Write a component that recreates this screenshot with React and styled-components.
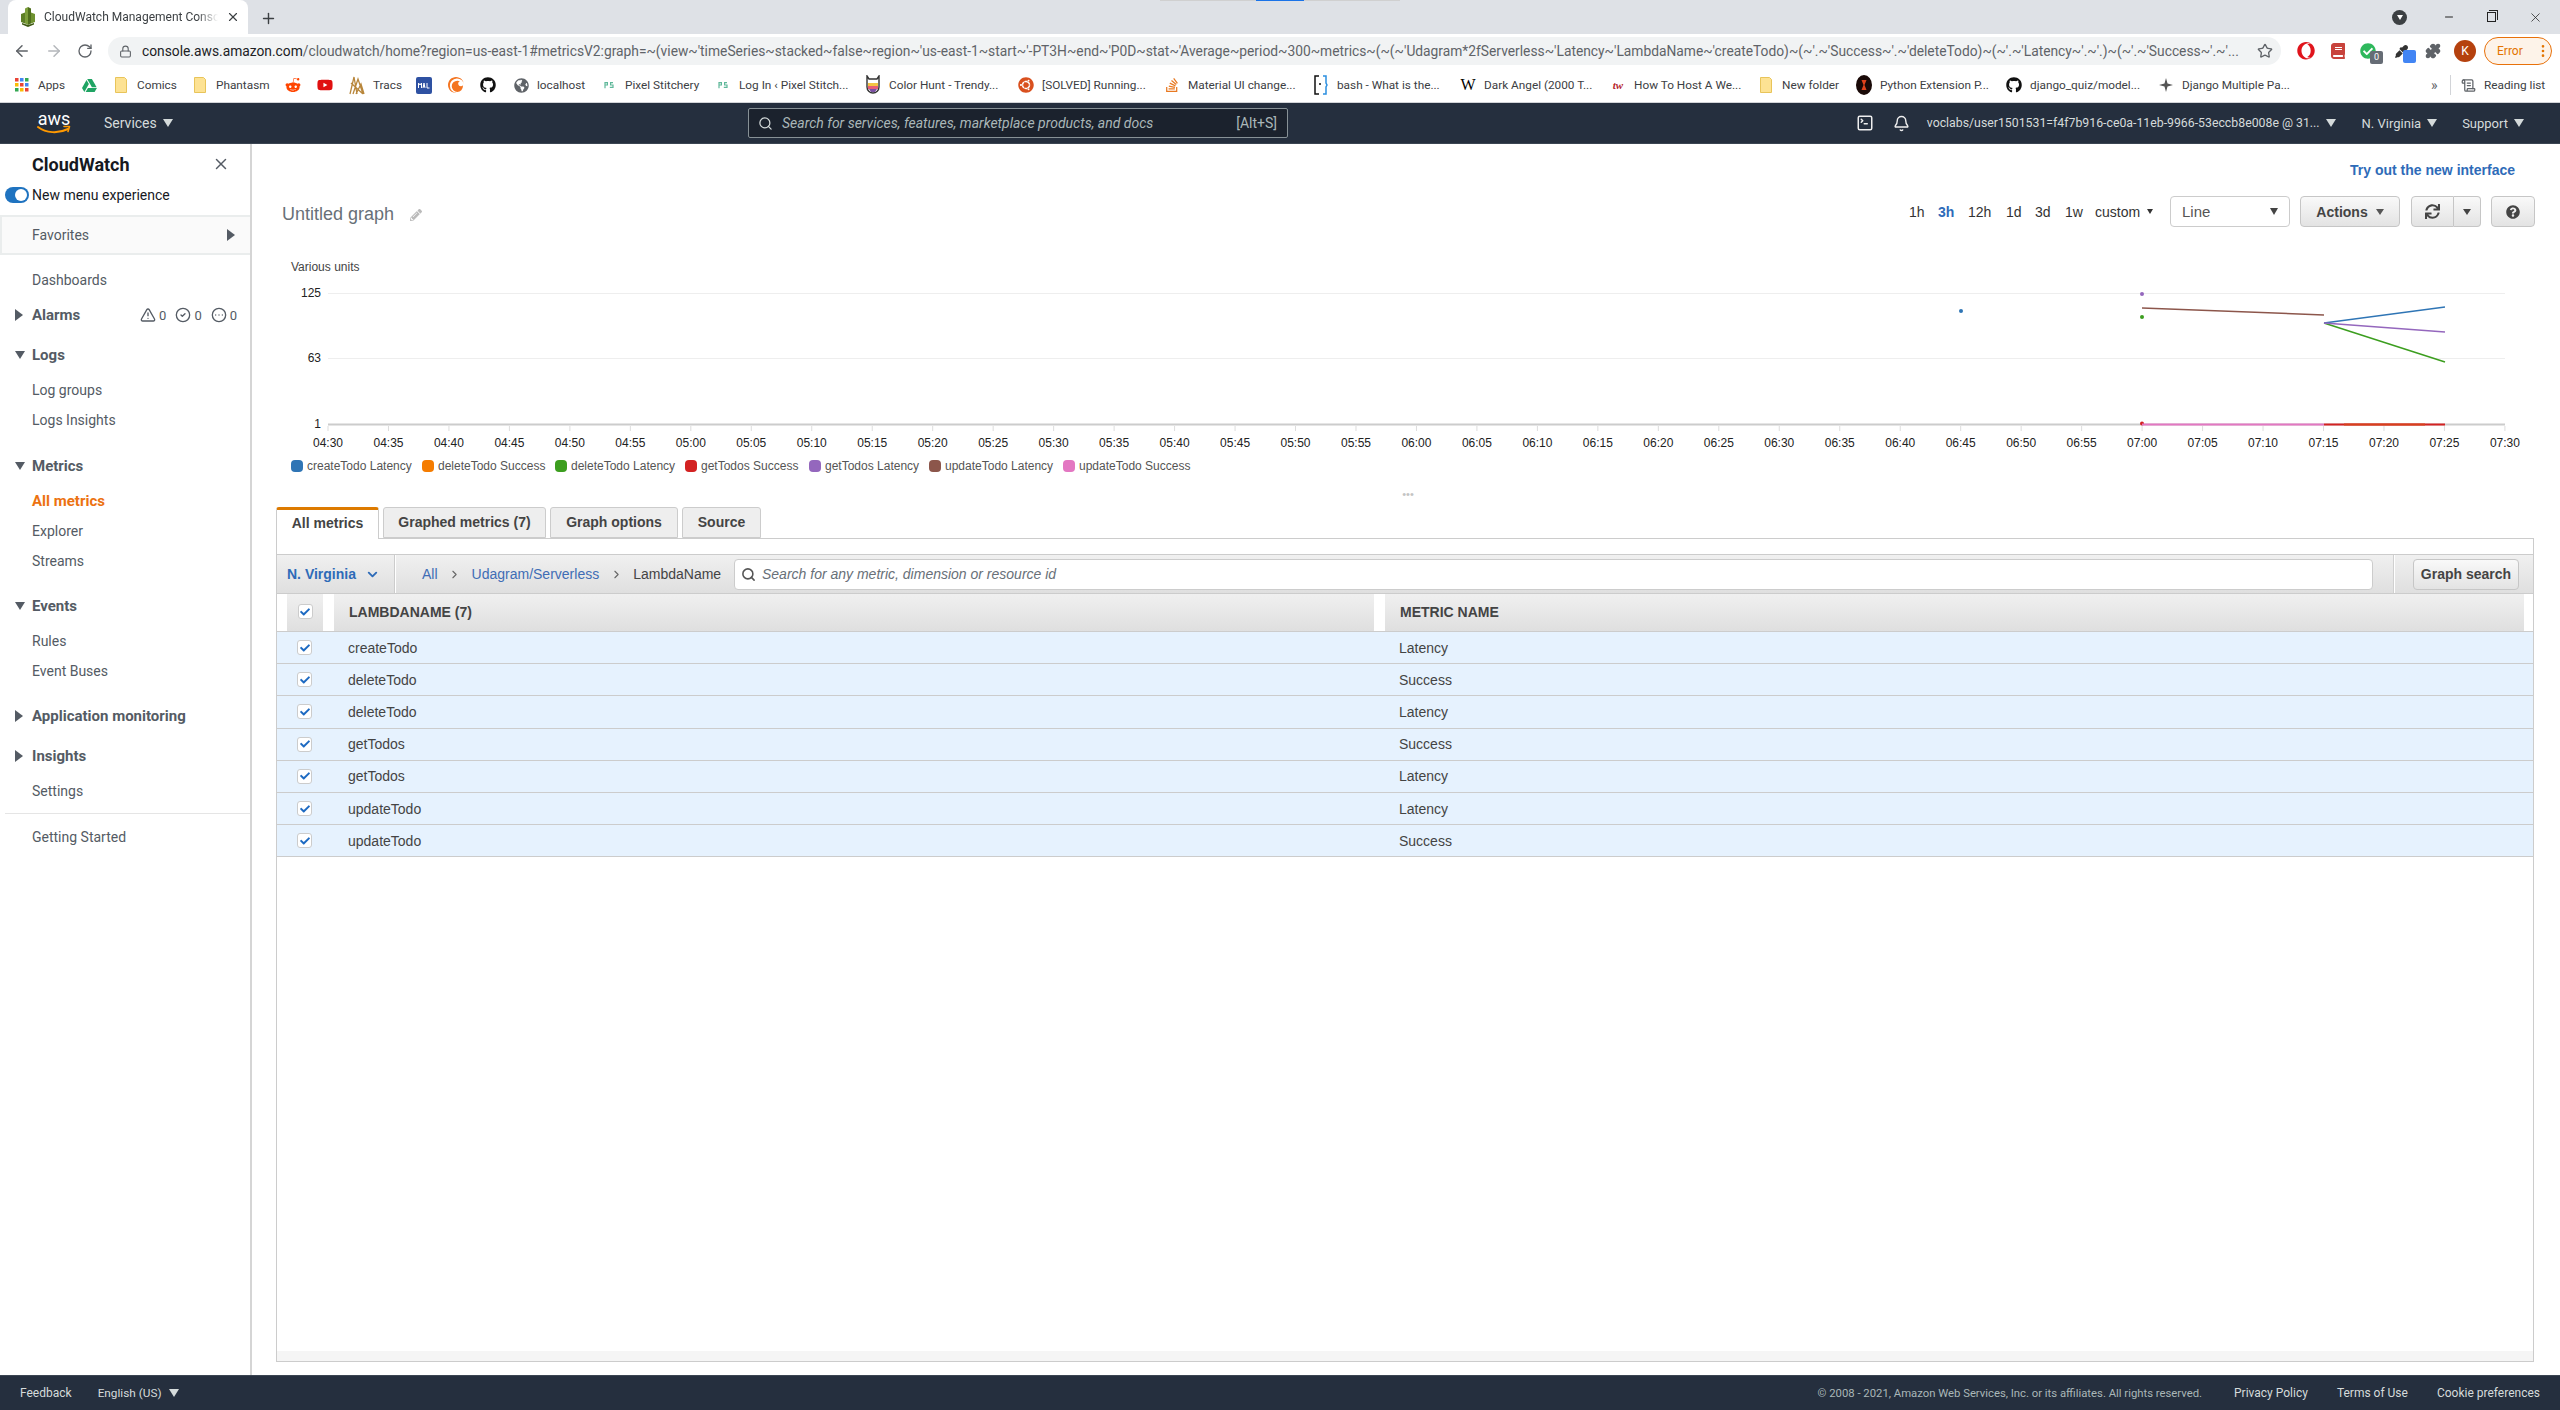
import React from 'react';
import styled, { createGlobalStyle } from 'styled-components';
import { ArrowLeft, ArrowRight, RotateCw, Lock, X, Plus, Minus, Star, Search, Bell, Puzzle, SquareTerminal, TriangleAlert, CircleCheck, CircleEllipsis, ChevronDown, ChevronRight, EllipsisVertical, ScrollText } from 'lucide-react';
import { FaGithub, FaRedditAlien, FaYoutube, FaStackOverflow, FaUbuntu, FaPencilAlt, FaSync, FaQuestionCircle, FaGlobeAmericas, FaOpera, FaBook, FaCheckCircle, FaEyeDropper, FaCheck } from 'react-icons/fa';
import { SiCrunchyroll, SiGoogledrive } from 'react-icons/si';

const UI = '"Roboto", "Liberation Sans", sans-serif';
const ARIAL = '"Liberation Sans", Arial, sans-serif';

const GlobalStyle = createGlobalStyle`
  html, body { margin: 0; padding: 0; height: 100%; background: #fff; }
  #root { height: 100%; }
  * { box-sizing: border-box; }
`;

const Page = styled.div`
  height: 100vh;
  display: flex;
  flex-direction: column;
  overflow: hidden;
  font-family: ${UI};
`;

/* ---- browser chrome ---- */
const TabStrip = styled.div`
  height: 34px;
  flex: none;
  background: #dee1e6;
  display: flex;
  align-items: flex-end;
  padding-left: 8px;
  position: relative;
`;
const TabTop = styled.div`
  width: 240px;
  height: 34px;
  background: #fff;
  border-radius: 8px 8px 0 0;
  display: flex;
  align-items: center;
  padding-left: 12px;
  font-size: 12px;
  color: #3c4043;
  gap: 8px;
`;
const TabTitle = styled.span`
  width: 174px;
  white-space: nowrap;
  -webkit-mask-image: linear-gradient(90deg, #000 88%, transparent);
`;
const NewTab = styled.div`
  margin: 0 0 7px 12px;
  color: #3c4043;
  display: flex;
`;
const LoadBar = styled.div`
  position: absolute;
  left: 1160px;
  top: 0;
  width: 240px;
  height: 1px;
  background: #d0d0d0;
  &::after {
    content: '';
    position: absolute;
    left: 96px;
    width: 48px;
    height: 1px;
    background: #1a73e8;
  }
`;
const WindowControls = styled.div`
  margin-left: auto;
  height: 34px;
  display: flex;
  align-items: center;
  color: #222;
  padding-right: 17px;
  gap: 32px;
`;
const ProfileDot = styled.div`
  width: 15px;
  height: 15px;
  border-radius: 50%;
  background: #3c4043;
  display: flex;
  align-items: center;
  justify-content: center;
  margin-right: 4px;
  &::after {
    content: '';
    border-left: 3.5px solid transparent;
    border-right: 3.5px solid transparent;
    border-top: 5px solid #fff;
  }
`;
const RestoreIcon = styled.div`
  width: 9px;
  height: 10px;
  border: 1px solid #222;
  position: relative;
  &::after {
    content: '';
    position: absolute;
    top: -3px;
    right: -3px;
    width: 8px;
    height: 9px;
    border-top: 1px solid #222;
    border-right: 1px solid #222;
  }
`;

const Toolbar = styled.div`
  height: 34px;
  flex: none;
  display: flex;
  align-items: center;
  background: #fff;
  padding: 0 8px 0 13px;
`;
const NavIcons = styled.div`
  display: flex;
  align-items: center;
  gap: 14px;
  width: 95px;
  flex: none;
`;
const AddressBar = styled.div`
  width: 2173px;
  height: 28px;
  flex: none;
  border-radius: 14px;
  background: #f1f3f4;
  display: flex;
  align-items: center;
  padding-left: 11px;
  gap: 10px;
  font-size: 13.8px;
  color: #5f6368;
`;
const Url = styled.div`
  width: 2094px;
  flex: none;
  white-space: nowrap;
  b { font-weight: 400; color: #202124; }
`;
const StarSlot = styled.span`
  margin-left: 11px;
  display: flex;
`;
const ExtIcons = styled.div`
  display: flex;
  align-items: center;
  flex: 1;
  padding-left: 9px;
`;
const ExtBadge = styled.span`
  position: absolute;
  left: 50%;
  margin-left: 2px;
  bottom: -5px;
  width: 13px;
  height: 13px;
  background: ${p => p.$c || '#666c75'};
  border-radius: 2px;
  color: #fff;
  font-size: 9px;
  line-height: 13px;
  text-align: center;
`;
const ExtSlot = styled.div`
  position: relative;
  width: ${p => p.$w}px;
  flex: none;
  display: flex;
  align-items: center;
  justify-content: center;
`;
const Avatar = styled.div`
  width: 22px;
  height: 22px;
  border-radius: 50%;
  background: #b5410e;
  color: #fff;
  font-size: 12px;
  display: flex;
  align-items: center;
  justify-content: center;
`;
const ErrorPill = styled.div`
  width: 68px;
  height: 28px;
  flex: none;
  border: 1px solid #e8710a;
  border-radius: 14px;
  background: #fdf3e9;
  color: #e37400;
  font-size: 12px;
  display: flex;
  align-items: center;
  padding-left: 12px;
  justify-content: space-between;
`;

const Bookmarks = styled.div`
  height: 35px;
  flex: none;
  display: flex;
  align-items: center;
  padding-left: 14px;
  background: #fff;
  border-bottom: 1px solid #d2d4d8;
  font-size: 11.8px;
  color: #3c4043;
`;
const Bookmark = styled.div`
  width: ${p => p.$w}px;
  flex: none;
  display: flex;
  align-items: center;
  gap: 8px;
  white-space: nowrap;
`;
const BookIcon = styled.span`
  width: 16px;
  height: 16px;
  flex: none;
  display: flex;
  align-items: center;
  justify-content: center;
`;
const Chevrons = styled.div`
  width: 19px;
  font-size: 14px;
  color: #5f6368;
`;
const BookDivider = styled.div`
  width: 1px;
  height: 20px;
  background: #d2d4d8;
  margin-right: 10px;
`;
const ReadingList = styled.div`
  display: flex;
  align-items: center;
  gap: 8px;
`;

/* ---- aws bars ---- */
const NavBar = styled.div`
  height: 41px;
  flex: none;
  background: #252f3e;
  border-bottom: 1px solid #3b4552;
  display: flex;
  align-items: center;
  color: #d5dbdb;
  font-size: 14px;
  position: relative;
`;
const AwsLogo = styled.div`
  width: 34px;
  margin-left: 37px;
  color: #fff;
  font-size: 18px;
  line-height: 15px;
  text-align: center;
  svg { display: block; margin-top: -1px; }
`;
const NavItem = styled.div`
  display: flex;
  align-items: center;
  gap: ${p => p.$gap || 6}px;
  white-space: nowrap;
  font-size: ${p => p.$size || 14}px;
  margin-left: ${p => p.$ml || 0}px;
`;
const Caret = styled.span`
  display: inline-block;
  flex: none;
  width: 0;
  height: 0;
  border-left: ${p => (p.$size || 10) / 2}px solid transparent;
  border-right: ${p => (p.$size || 10) / 2}px solid transparent;
  border-top: ${p => (p.$size || 10) * 0.8}px solid ${p => p.$color || '#d5dbdb'};
`;
const SideArrow = styled.span`
  display: inline-block;
  width: 0;
  height: 0;
  border-top: 6px solid transparent;
  border-bottom: 6px solid transparent;
  border-left: 8px solid #545b64;
`;
const ServiceSearch = styled.div`
  width: 540px;
  height: 30px;
  position: absolute;
  left: 748px;
  top: 5px;
  background: #1b222d;
  border: 1px solid #879196;
  border-radius: 2px;
  display: flex;
  align-items: center;
  padding: 0 10px 0 9px;
  gap: 9px;
  color: #aab7b8;
`;
const SearchHint = styled.span`
  font-style: italic;
  flex: 1;
`;
const NavRight = styled.div`
  margin-left: auto;
  display: flex;
  align-items: center;
  padding-right: 36px;
  color: #d5dbdb;
`;
const BellSlot = styled.span`
  display: flex;
  margin-left: 19px;
`;

const Body = styled.div`
  flex: 1;
  min-height: 0;
  display: flex;
`;

const Footer = styled.div`
  height: 35px;
  flex: none;
  background: #252f3e;
  border-top: 1px solid #3b4552;
  display: flex;
  align-items: center;
  padding: 0 20px;
  color: #d5dbdb;
  font-size: 12px;
`;
const FooterRight = styled.div`
  margin-left: auto;
  display: flex;
  align-items: center;
`;
const Copyright = styled.span`
  color: #aab7b8;
  font-size: 11.3px;
  margin-right: 32px;
`;
const FooterLink = styled.span`
  margin-right: ${p => p.$mr || 0}px;
`;

/* ---- sidebar ---- */
const Sidebar = styled.aside`
  width: 252px;
  flex: none;
  border-right: 2px solid #d5d5d5;
  color: #545b64;
  font-size: 14px;
  padding-top: 9px;
`;
const SideHead = styled.div`
  height: 22px;
  padding: 0 20px 0 32px;
  display: flex;
  align-items: center;
  justify-content: space-between;
  font-size: 18px;
  font-weight: 700;
  color: #16191f;
`;
const MenuToggle = styled.div`
  display: flex;
  align-items: center;
  height: 24px;
  margin-top: 8px;
  padding-left: 5px;
  gap: 3px;
  color: #16191f;
`;
const ToggleTrack = styled.div`
  width: 24px;
  height: 16px;
  border-radius: 8px;
  background: #1f73c0;
  padding: 2px;
  display: flex;
  justify-content: flex-end;
  &::after {
    content: '';
    width: 12px;
    height: 12px;
    border-radius: 50%;
    background: #fff;
  }
`;
const FavoritesRow = styled.div`
  height: 40px;
  margin-top: 8px;
  background: #fafafa;
  border: 2px solid #eaeded;
  border-right: none;
  display: flex;
  align-items: center;
  justify-content: space-between;
  padding: 0 15px 0 30px;
`;
const SideList = styled.div`
  display: flex;
  flex-direction: column;
`;
const SideLink = styled.div`
  height: 30px;
  display: flex;
  align-items: center;
  padding-left: 32px;
  margin-top: ${p => p.$mt || 0}px;
  color: ${p => (p.$active ? '#ec7211' : '#545b64')};
  font-weight: ${p => (p.$active ? 700 : 400)};
  font-size: ${p => (p.$active ? 15 : 14)}px;
`;
const SideGroup = styled.div`
  height: 30px;
  display: flex;
  align-items: center;
  margin-top: ${p => p.$mt || 0}px;
  font-size: 15px;
  font-weight: 700;
  padding-left: 15px;
`;
const GroupMark = styled.span`
  width: 17px;
  display: flex;
  align-items: center;
`;
const AlarmCounts = styled.div`
  margin-left: auto;
  padding-right: 13px;
  display: flex;
  align-items: center;
  gap: 9px;
  font-weight: 400;
  font-size: 13px;
`;
const AlarmCount = styled.span`
  display: flex;
  align-items: center;
  gap: 3px;
`;
const SideRule = styled.div`
  height: 1px;
  background: #e5e5e5;
  margin: 7px 0 8px 5px;
`;

/* ---- main ---- */
const Main = styled.main`
  flex: 1;
  min-width: 0;
  display: flex;
  flex-direction: column;
  padding: 0 26px 13px 24px;
  font-family: ${ARIAL};
  font-size: 14px;
  color: #444;
`;
const TryRow = styled.div`
  height: 20px;
  margin-top: 16px;
  text-align: right;
  padding-right: 19px;
  line-height: 20px;
  font-weight: 700;
  color: #2e6bb8;
`;
const GraphHead = styled.div`
  height: 31px;
  margin-top: 16px;
  display: flex;
  align-items: center;
`;
const GraphTitle = styled.div`
  margin-left: 6px;
  padding-top: 6px;
  font-size: 18px;
  color: #687078;
  display: flex;
  align-items: center;
  gap: 16px;
  svg { color: #bbb; }
`;
const RangeGroup = styled.div`
  margin-left: auto;
  margin-right: -1px;
  display: flex;
  align-items: center;
  color: #333;
`;
const RangeLink = styled.span`
  width: ${p => p.$w}px;
  color: ${p => (p.$on ? '#2e6bb8' : '#333')};
  font-weight: ${p => (p.$on ? 700 : 400)};
  white-space: nowrap;
  display: flex;
  align-items: center;
  gap: 7px;
`;
const ChartSelect = styled.div`
  width: 120px;
  height: 31px;
  border: 1px solid #ccc;
  border-radius: 4px;
  background: #fff;
  display: flex;
  align-items: center;
  justify-content: space-between;
  padding: 0 11px;
  margin: 0 10px 0 0;
  font-size: 15px;
  color: #555;
`;
const GreyButton = styled.div`
  height: 31px;
  width: ${p => p.$w}px;
  flex: none;
  border: 1px solid #c6c6c6;
  border-radius: ${p => p.$radius || '4px'};
  border-left-width: ${p => (p.$joined ? 0 : 1)}px;
  background: linear-gradient(#f9f9f9, #e3e3e3);
  display: flex;
  align-items: center;
  justify-content: center;
  gap: 8px;
  font-weight: 700;
  color: #444;
  white-space: nowrap;
  margin-left: ${p => p.$ml || 0}px;
`;
const ChartBox = styled.svg`
  display: block;
  width: 2258px;
  height: 205px;
  margin-top: 24px;
  flex: none;
  font-family: ${ARIAL};
`;
const Legend = styled.div`
  height: 20px;
  flex: none;
  padding-left: 15px;
  display: flex;
  align-items: center;
  font-size: 12px;
  color: #555;
`;
const LegendItem = styled.div`
  width: ${p => p.$w}px;
  flex: none;
  display: flex;
  align-items: center;
  gap: 4px;
  white-space: nowrap;
`;
const Swatch = styled.span`
  width: 12px;
  height: 12px;
  border-radius: 4px;
  background: ${p => p.$c};
`;
const DragHandle = styled.div`
  height: 31px;
  flex: none;
  display: flex;
  align-items: center;
  justify-content: center;
  color: #c4c4c4;
  font-size: 11px;
  padding: 5px 0 0 6px;
`;
const TabRow = styled.div`
  height: 31px;
  flex: none;
  display: flex;
  gap: 4px;
  position: relative;
  z-index: 1;
`;
const PanelTab = styled.div`
  width: ${p => p.$w}px;
  height: ${p => (p.$on ? 32 : 31)}px;
  padding-bottom: ${p => (p.$on ? 3 : 2)}px;
  background: ${p => (p.$on ? '#fff' : '#eee')};
  border: 1px solid #ccc;
  border-top: ${p => (p.$on ? '3px solid #dd7a00' : '1px solid #ccc')};
  border-bottom: ${p => (p.$on ? 'none' : '1px solid #ccc')};
  border-radius: 3px 3px 0 0;
  display: flex;
  align-items: center;
  justify-content: center;
  font-weight: 700;
  color: #444;
`;
const Panel = styled.div`
  flex: 1;
  min-height: 0;
  border: 1px solid #ccc;
  display: flex;
  flex-direction: column;
  padding-top: 15px;
`;
const FilterBar = styled.div`
  height: 40px;
  flex: none;
  background: linear-gradient(#f0f0f0, #dfdfdf);
  border-top: 1px solid #ccc;
  border-bottom: 1px solid #ccc;
  display: flex;
  align-items: center;
`;
const RegionPick = styled.div`
  width: 119px;
  height: 100%;
  border-right: 1px solid #fff;
  box-shadow: inset -1px 0 0 #ccc;
  padding-left: 10px;
  display: flex;
  align-items: center;
  gap: 9px;
  font-weight: 700;
  color: #2e6bb8;
`;
const Crumbs = styled.div`
  margin-left: 26px;
  display: flex;
  align-items: center;
  width: 312px;
  color: #444;
`;
const CrumbLink = styled.span`
  color: #3f6db5;
`;
const CrumbSep = styled.span`
  width: ${p => p.$w}px;
  display: flex;
  justify-content: center;
  color: #666;
`;
const MetricSearch = styled.div`
  width: 1639px;
  height: 31px;
  border: 1px solid #ccc;
  border-radius: 4px;
  background: #fff;
  display: flex;
  align-items: center;
  padding-left: 6px;
  gap: 6px;
  font-style: italic;
  color: #687078;
`;
const BarDivider = styled.div`
  width: 1px;
  height: 100%;
  background: #fff;
  margin-left: 21px;
  box-shadow: -1px 0 0 #d0d0d0;
`;
const TableHead = styled.div`
  height: 38px;
  flex: none;
  display: flex;
  padding: 0 9px 0 10px;
  gap: 11px;
  border-bottom: 1px solid #ccc;
`;
const HeadCell = styled.div`
  width: ${p => (p.$w ? `${p.$w}px` : 'auto')};
  flex: ${p => (p.$w ? 'none' : 1)};
  background: linear-gradient(#f0f0f0, #dfdfdf);
  display: flex;
  align-items: center;
  justify-content: ${p => (p.$center ? 'center' : 'flex-start')};
  padding: 0 0 2px ${p => p.$pl || 0}px;
  font-weight: 700;
  font-size: 14px;
  color: #444;
  white-space: pre;
`;
const Row = styled.div`
  height: 32.2px;
  flex: none;
  background: #e6f2fe;
  border-bottom: 1px solid #ccc;
  display: flex;
  align-items: center;
`;
const CheckCell = styled.div`
  width: 71px;
  padding-left: 20px;
  display: flex;
`;
const NameCell = styled.div`
  width: 1051px;
`;
const CheckBox = styled.span`
  width: 15px;
  height: 15px;
  border: 1px solid #ccc;
  border-radius: 3px;
  background: #fff;
  display: flex;
  align-items: center;
  justify-content: center;
  color: #1d6ac2;
`;
const PanelFill = styled.div`
  flex: 1;
`;
const PanelEnd = styled.div`
  height: 10px;
  flex: none;
  background: #f5f5f5;
`;

/* ---- small drawn icons ---- */
const CloudWatchIcon = () => (
  <svg width="16" height="20" viewBox="0 0 16 20">
    <path d="M1 7l4-1.500v11L1 15z" fill="#5d7f26" />
    <path d="M15 7l-4-1.500v11l4-1.500z" fill="#6f9230" />
    <path d="M5 1.500L8 0v18l-3-1.500z" fill="#7d9f3c" />
    <path d="M8 0l3 1.500v15L8 18z" fill="#4f6f1c" />
    <path d="M2 16l6 2 6-2v1.500L8 20l-6-2.500z" fill="#3f5a15" />
  </svg>
);
const AppsIcon = () => (
  <svg width="14" height="14" viewBox="0 0 14 14">
    {[0, 1, 2].map(r => [0, 1, 2].map(c => (
      <rect key={`${r}${c}`} x={c * 5} y={r * 5} width="3.500" height="3.500"
        fill={['#ea4335', '#4285f4', '#34a853', '#fbbc04', '#ea4335', '#4285f4', '#34a853', '#fbbc04', '#ea4335'][r * 3 + c]} />
    )))}
  </svg>
);
const FolderIcon = () => (
  <svg width="12" height="16" viewBox="0 0 12 16">
    <path d="M.5.500h9l2 2v13H.5z" fill="#fde293" stroke="#e8c45a" />
  </svg>
);
const TracsIcon = () => (
  <svg width="16" height="20" viewBox="0 0 16 20" fill="none" stroke="#b8863b" strokeWidth="1.300">
    <path d="M1 19L5 2l3 17M4 19L9 4l5 15M7 19l5-10 3 10M2 8l12 11" />
  </svg>
);
const MalIcon = () => (
  <svg width="16" height="17" viewBox="0 0 16 17">
    <rect width="16" height="17" rx="2" fill="#2e51a2" />
    <path d="M2.500 11V6l1.500 2 1.500-2v5M7 11l1-5 1 5M7.300 9.500h1.500M11 6v5h2.500" stroke="#fff" strokeWidth="1" fill="none" />
  </svg>
);
const PsIcon = () => (
  <svg width="10" height="8" viewBox="0 0 12 10" fill="none" stroke="#5fb89a" strokeWidth="1.500">
    <path d="M1 9V2h3v3H1M11 2H8v3h3v3H7" />
  </svg>
);
const BookmarkLetter = styled.span`
  font-family: "Liberation Serif", serif;
  font-size: ${p => p.$size || 16}px;
  font-style: ${p => (p.$italic ? 'italic' : 'normal')};
  font-weight: ${p => (p.$italic ? 700 : 400)};
  color: ${p => p.$c || '#000'};
`;
const ColorHuntIcon = () => (
  <svg width="14" height="20" viewBox="0 0 14 20">
    <path d="M1 1l2 3h8l2-3v11a6 6 0 0 1-12 0z" fill="#fff" stroke="#333" strokeWidth="1.400" />
    <path d="M2 8h10v3H2z" fill="#f4c542" />
    <path d="M2 11h10v3H2z" fill="#e85d75" />
    <path d="M3 14h8l-2 3H5z" fill="#7a4fa3" />
  </svg>
);
const BracketIcon = () => (
  <svg width="14" height="20" viewBox="0 0 14 20" fill="none" strokeWidth="1.500">
    <path d="M5 1H1v18h4" stroke="#111" />
    <path d="M9 1h3v7l1 2-1 2v7H9" stroke="#2b8fe0" />
    <circle cx="6" cy="9" r="1" fill="#111" />
  </svg>
);
const PythonBall = () => (
  <svg width="16" height="20" viewBox="0 0 16 20">
    <ellipse cx="8" cy="10" rx="8" ry="10" fill="#1a0a08" />
    <path d="M5.500 5h5l-2 5 2 5h-5l2-5z" fill="#e0421c" />
  </svg>
);
const DjangoSpark = () => (
  <svg width="14" height="14" viewBox="0 0 14 14">
    <path d="M7 0l1.500 5.500L14 7l-5.500 1.500L7 14l-1.500-5.500L0 7l5.500-1.500z" fill="#555" />
  </svg>
);
const AwsSmile = () => (
  <svg width="34" height="11" viewBox="0 0 34 11" fill="none">
    <path d="M1 2c8 6 20 7 30 2" stroke="#f90" strokeWidth="2" strokeLinecap="round" />
    <path d="M27 1.500l5.500 0-1.500 5" stroke="#f90" strokeWidth="1.600" strokeLinecap="round" strokeLinejoin="round" />
  </svg>
);

/* ---- data ---- */
const URL_TAIL = "/cloudwatch/home?region=us-east-1#metricsV2:graph=~(view~'timeSeries~stacked~false~region~'us-east-1~start~'-PT3H~end~'P0D~stat~'Average~period~300~metrics~(~(~'Udagram*2fServerless~'Latency~'LambdaName~'createTodo)~(~'.~'Success~'.~'deleteTodo)~(~'.~'Latency~'.~'.)~(~'.~'Success~'.~'...";

const bookmarks = [
  { at: 14, icon: <AppsIcon />, label: 'Apps' },
  { at: 81, icon: <SiGoogledrive size={15} color="#1fa463" /> },
  { at: 113, icon: <FolderIcon />, label: 'Comics' },
  { at: 192, icon: <FolderIcon />, label: 'Phantasm' },
  { at: 285, icon: <FaRedditAlien size={16} color="#ff4500" /> },
  { at: 317, icon: <FaYoutube size={16} color="#e01010" /> },
  { at: 349, icon: <TracsIcon />, label: 'Tracs' },
  { at: 416, icon: <MalIcon /> },
  { at: 448, icon: <SiCrunchyroll size={16} color="#f47521" /> },
  { at: 480, icon: <FaGithub size={16} color="#111" /> },
  { at: 513, icon: <FaGlobeAmericas size={15} color="#5f6368" />, label: 'localhost' },
  { at: 601, icon: <PsIcon />, label: 'Pixel Stitchery' },
  { at: 715, icon: <PsIcon />, label: 'Log In ‹ Pixel Stitch...' },
  { at: 865, icon: <ColorHuntIcon />, label: 'Color Hunt - Trendy...' },
  { at: 1018, icon: <FaUbuntu size={16} color="#d9501e" />, label: '[SOLVED] Running...' },
  { at: 1164, icon: <FaStackOverflow size={16} color="#e87922" />, label: 'Material UI change...' },
  { at: 1313, icon: <BracketIcon />, label: 'bash - What is the...' },
  { at: 1460, icon: <BookmarkLetter>W</BookmarkLetter>, label: 'Dark Angel (2000 T...' },
  { at: 1610, icon: <BookmarkLetter $size={11} $italic $c="#b5262d">tw</BookmarkLetter>, label: 'How To Host A We...' },
  { at: 1758, icon: <FolderIcon />, label: 'New folder' },
  { at: 1856, icon: <PythonBall />, label: 'Python Extension P...' },
  { at: 2006, icon: <FaGithub size={16} color="#111" />, label: 'django_quiz/model...' },
  { at: 2158, icon: <DjangoSpark />, label: 'Django Multiple Pa...' },
  { at: 2431 },
];

const legend = [
  ['createTodo Latency', '#2f75b5', 131],
  ['deleteTodo Success', '#f57c00', 133],
  ['deleteTodo Latency', '#3c9e1f', 130],
  ['getTodos Success', '#d32222', 124],
  ['getTodos Latency', '#9467bd', 120],
  ['updateTodo Latency', '#8c564b', 134],
  ['updateTodo Success', '#e377c2', 140],
];

const rows = [
  ['createTodo', 'Latency'],
  ['deleteTodo', 'Success'],
  ['deleteTodo', 'Latency'],
  ['getTodos', 'Success'],
  ['getTodos', 'Latency'],
  ['updateTodo', 'Latency'],
  ['updateTodo', 'Success'],
];

const X0 = 328;
const STEP = 60.47;
const ticks = Array.from({ length: 37 }, (_, i) => {
  const mins = 270 + i * 5;
  const h = String(Math.floor(mins / 60)).padStart(2, '0');
  const m = String(mins % 60).padStart(2, '0');
  return { x: X0 + i * STEP, label: `${h}:${m}` };
});

const Chart = () => (
  <ChartBox viewBox="276 250 2258 205">
    <text x="291" y="270" fontSize="12" fill="#444">Various units</text>
    <g fontSize="12" fill="#222" textAnchor="end">
      <text x="321" y="296">125</text>
      <text x="321" y="361">63</text>
      <text x="321" y="427">1</text>
    </g>
    <path d="M328 292.500H2505M328 357.500H2505" stroke="#eee" />
    <path d="M328 423.500H2505" stroke="#ccc" strokeWidth="2" />
    {ticks.map(t => (
      <g key={t.label}>
        <path d={`M${t.x} 425v5`} stroke="#ddd" />
        <text x={t.x} y="446" fontSize="12" fill="#222" textAnchor="middle">{t.label}</text>
      </g>
    ))}
    <circle cx="1961" cy="310" r="2" fill="#2f75b5" />
    <circle cx="2142" cy="293" r="2" fill="#9467bd" />
    <circle cx="2142" cy="316" r="2" fill="#3c9e1f" />
    <circle cx="2142" cy="422.500" r="2" fill="#d32222" />
    <g fill="none" strokeWidth="1.500">
      <path d="M2142 307L2324 314" stroke="#8c564b" />
      <path d="M2324 322L2445 361" stroke="#3c9e1f" />
      <path d="M2324 322L2445 306" stroke="#2f75b5" />
      <path d="M2324 322L2445 331" stroke="#9467bd" />
    </g>
    <path d="M2142 423.500H2324" stroke="#e377c2" strokeWidth="2" />
    <path d="M2324 423.500H2445" stroke="#d32222" strokeWidth="2" />
    <path d="M2344 423.500H2425" stroke="#d8401c" strokeWidth="2" />
  </ChartBox>
);

const App = () => (
  <Page>
    <GlobalStyle />
    <TabStrip>
      <LoadBar />
      <TabTop>
        <CloudWatchIcon />
        <TabTitle>CloudWatch Management Conso</TabTitle>
        <X size={14} />
      </TabTop>
      <NewTab><Plus size={17} /></NewTab>
      <WindowControls>
        <ProfileDot />
        <Minus size={12} />
        <RestoreIcon />
        <X size={15} strokeWidth={1.2} />
      </WindowControls>
    </TabStrip>
    <Toolbar>
      <NavIcons>
        <ArrowLeft size={18} color="#5f6368" />
        <ArrowRight size={18} color="#b4b7bb" />
        <RotateCw size={16} color="#5f6368" />
      </NavIcons>
      <AddressBar>
        <Lock size={13} color="#5f6368" />
        <Url><b>console.aws.amazon.com</b>{URL_TAIL}</Url>
        <StarSlot><Star size={16} color="#5f6368" /></StarSlot>
      </AddressBar>
      <ExtIcons>
        <ExtSlot $w={32}><FaOpera size={18} color="#e0141c" /></ExtSlot>
        <ExtSlot $w={32}><FaBook size={16} color="#c8433c" /></ExtSlot>
        <ExtSlot $w={28}>
          <FaCheckCircle size={16} color="#2eb85c" />
          <ExtBadge>0</ExtBadge>
        </ExtSlot>
        <ExtSlot $w={38}>
          <FaEyeDropper size={13} color="#333" />
          <ExtBadge $c="#4285f4" />
        </ExtSlot>
        <ExtSlot $w={26}><Puzzle size={16} color="#5f6368" fill="#5f6368" /></ExtSlot>
        <ExtSlot $w={38}><Avatar>K</Avatar></ExtSlot>
        <ErrorPill>Error<EllipsisVertical size={16} /></ErrorPill>
      </ExtIcons>
    </Toolbar>
    <Bookmarks>
      {bookmarks.slice(0, -1).map((b, i) => (
        <Bookmark key={b.at} $w={bookmarks[i + 1].at - b.at}>
          <BookIcon>{b.icon}</BookIcon>
          {b.label}
        </Bookmark>
      ))}
      <Chevrons>»</Chevrons>
      <BookDivider />
      <ReadingList>
        <ScrollText size={15} color="#5f6368" />
        Reading list
      </ReadingList>
    </Bookmarks>

    <NavBar>
      <AwsLogo>aws<AwsSmile /></AwsLogo>
      <NavItem $ml={33}>Services <Caret /></NavItem>
      <ServiceSearch>
        <Search size={15} color="#d5dbdb" />
        <SearchHint>Search for services, features, marketplace products, and docs</SearchHint>
        <span>[Alt+S]</span>
      </ServiceSearch>
      <NavRight>
        <SquareTerminal size={18} color="#eee" />
        <BellSlot><Bell size={17} color="#eee" /></BellSlot>
        <NavItem $size={12.3} $ml={17}>voclabs/user1501531=f4f7b916-ce0a-11eb-9966-53eccb8e008e @ 31... <Caret /></NavItem>
        <NavItem $size={13} $ml={26}>N. Virginia <Caret /></NavItem>
        <NavItem $size={13} $ml={25}>Support <Caret /></NavItem>
      </NavRight>
    </NavBar>

    <Body>
      <Sidebar>
        <SideHead>CloudWatch <X size={18} color="#545b64" /></SideHead>
        <MenuToggle><ToggleTrack />New menu experience</MenuToggle>
        <FavoritesRow>Favorites <SideArrow /></FavoritesRow>
        <SideList>
          <SideLink $mt={10}>Dashboards</SideLink>
          <SideGroup $mt={5}>
            <GroupMark><SideArrow /></GroupMark>
            Alarms
            <AlarmCounts>
              <AlarmCount><TriangleAlert size={16} />0</AlarmCount>
              <AlarmCount><CircleCheck size={16} />0</AlarmCount>
              <AlarmCount><CircleEllipsis size={16} />0</AlarmCount>
            </AlarmCounts>
          </SideGroup>
          <SideGroup $mt={10}><GroupMark><Caret $size={10} $color="#545b64" /></GroupMark>Logs</SideGroup>
          <SideLink $mt={5}>Log groups</SideLink>
          <SideLink>Logs Insights</SideLink>
          <SideGroup $mt={16}><GroupMark><Caret $size={10} $color="#545b64" /></GroupMark>Metrics</SideGroup>
          <SideLink $mt={5} $active>All metrics</SideLink>
          <SideLink>Explorer</SideLink>
          <SideLink>Streams</SideLink>
          <SideGroup $mt={15}><GroupMark><Caret $size={10} $color="#545b64" /></GroupMark>Events</SideGroup>
          <SideLink $mt={5}>Rules</SideLink>
          <SideLink>Event Buses</SideLink>
          <SideGroup $mt={15}><GroupMark><SideArrow /></GroupMark>Application monitoring</SideGroup>
          <SideGroup $mt={10}><GroupMark><SideArrow /></GroupMark>Insights</SideGroup>
          <SideLink $mt={5}>Settings</SideLink>
          <SideRule />
          <SideLink>Getting Started</SideLink>
        </SideList>
      </Sidebar>

      <Main>
        <TryRow>Try out the new interface</TryRow>
        <GraphHead>
          <GraphTitle>Untitled graph <FaPencilAlt size={12} /></GraphTitle>
          <RangeGroup>
            <RangeLink $w={29}>1h</RangeLink>
            <RangeLink $w={30} $on>3h</RangeLink>
            <RangeLink $w={38}>12h</RangeLink>
            <RangeLink $w={29}>1d</RangeLink>
            <RangeLink $w={30}>3d</RangeLink>
            <RangeLink $w={30}>1w</RangeLink>
            <RangeLink $w={75}>custom <Caret $size={7} $color="#333" /></RangeLink>
            <ChartSelect>Line <Caret $size={9} $color="#444" /></ChartSelect>
            <GreyButton $w={100}>Actions <Caret $size={8} $color="#555" /></GreyButton>
            <GreyButton $w={43} $ml={11} $radius="4px 0 0 4px"><FaSync size={15} /></GreyButton>
            <GreyButton $w={27} $joined $radius="0 4px 4px 0"><Caret $size={8} $color="#444" /></GreyButton>
            <GreyButton $w={44} $ml={10}><FaQuestionCircle size={14} /></GreyButton>
          </RangeGroup>
        </GraphHead>
        <Chart />
        <Legend>
          {legend.map(([name, color, width]) => (
            <LegendItem key={name} $w={width}><Swatch $c={color} />{name}</LegendItem>
          ))}
        </Legend>
        <DragHandle>•••</DragHandle>
        <TabRow>
          <PanelTab $w={103} $on>All metrics</PanelTab>
          <PanelTab $w={163}>Graphed metrics (7)</PanelTab>
          <PanelTab $w={128}>Graph options</PanelTab>
          <PanelTab $w={79}>Source</PanelTab>
        </TabRow>
        <Panel>
          <FilterBar>
            <RegionPick>N. Virginia <ChevronDown size={15} strokeWidth={3} /></RegionPick>
            <Crumbs>
              <CrumbLink>All</CrumbLink>
              <CrumbSep $w={34}><ChevronRight size={13} /></CrumbSep>
              <CrumbLink>Udagram/Serverless</CrumbLink>
              <CrumbSep $w={34}><ChevronRight size={13} /></CrumbSep>
              LambdaName
            </Crumbs>
            <MetricSearch><Search size={15} color="#555" strokeWidth={2.5} />Search for any metric, dimension or resource id</MetricSearch>
            <BarDivider />
            <GreyButton $w={106} $ml={18}>Graph search</GreyButton>
          </FilterBar>
          <TableHead>
            <HeadCell $w={36} $center><CheckBox><FaCheck size={10} /></CheckBox></HeadCell>
            <HeadCell $w={1040} $pl={15}>LAMBDANAME (7)</HeadCell>
            <HeadCell $pl={15}>METRIC NAME</HeadCell>
          </TableHead>
          {rows.map(([name, metric], i) => (
            <Row key={i}>
              <CheckCell><CheckBox><FaCheck size={10} /></CheckBox></CheckCell>
              <NameCell>{name}</NameCell>
              {metric}
            </Row>
          ))}
          <PanelFill />
          <PanelEnd />
        </Panel>
      </Main>
    </Body>

    <Footer>
      <FooterLink $mr={26}>Feedback</FooterLink>
      <NavItem $size={11.8} $gap={7}>English (US) <Caret /></NavItem>
      <FooterRight>
        <Copyright>© 2008 - 2021, Amazon Web Services, Inc. or its affiliates. All rights reserved.</Copyright>
        <FooterLink $mr={29}>Privacy Policy</FooterLink>
        <FooterLink $mr={29}>Terms of Use</FooterLink>
        <FooterLink>Cookie preferences</FooterLink>
      </FooterRight>
    </Footer>
  </Page>
);

export default App;
